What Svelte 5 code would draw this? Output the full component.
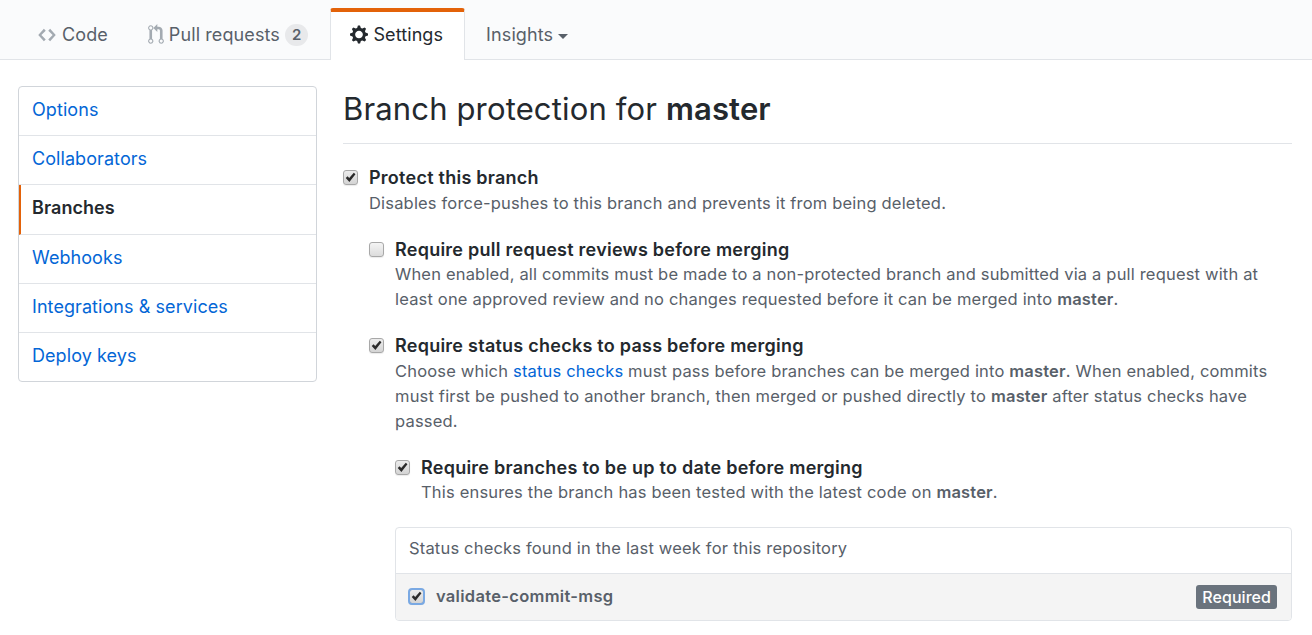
<script lang="ts">
  const menu = [
    { label: 'Options' },
    { label: 'Collaborators' },
    { label: 'Branches', selected: true },
    { label: 'Webhooks' },
    { label: 'Integrations & services' },
    { label: 'Deploy keys' }
  ];
</script>

<nav class="tabs">
  <a class="tab">
    <svg class="icon" width="18" height="20" viewBox="0 0 14 16"><path d="M9.5 3L8 4.5 11.5 8 8 11.5 9.5 13 14 8 9.5 3zm-5 0L0 8l4.5 5L6 11.5 2.5 8 6 4.5 4.5 3z" /></svg>
    Code
  </a>
  <a class="tab">
    <svg class="icon pr" width="16" height="21" viewBox="0 0 12 16"><path d="M11 11.28V5c-.03-.78-.34-1.47-.94-2.06C9.46 2.35 8.78 2.03 8 2H7V0L4 3l3 3V4h1c.27.02.48.11.69.31.21.2.3.42.31.69v6.28A1.993 1.993 0 0 0 10 15a1.993 1.993 0 0 0 1-3.72zm-1 2.92c-.66 0-1.2-.55-1.2-1.2 0-.65.55-1.2 1.2-1.2.65 0 1.2.55 1.2 1.2 0 .65-.55 1.2-1.2 1.2zM4 3c0-1.11-.89-2-2-2a1.993 1.993 0 0 0-1 3.72v6.56A1.993 1.993 0 0 0 2 15a1.993 1.993 0 0 0 1-3.72V4.72c.59-.34 1-.98 1-1.72zm-.8 10c0 .66-.55 1.2-1.2 1.2-.65 0-1.2-.55-1.2-1.2 0-.65.55-1.2 1.2-1.2.65 0 1.2.55 1.2 1.2zM2 4.2C1.34 4.2.8 3.65.8 3c0-.65.55-1.2 1.2-1.2.65 0 1.2.55 1.2 1.2 0 .65-.55 1.2-1.2 1.2z" /></svg>
    Pull requests
    <span class="counter">2</span>
  </a>
  <a class="tab selected">
    <svg class="icon" width="18" height="21" viewBox="0 0 14 16"><path d="M14 8.77v-1.6l-1.94-.64-.45-1.09.88-1.84-1.13-1.13-1.81.91-1.09-.45-.69-1.92h-1.6l-.63 1.94-1.11.45-1.84-.88-1.13 1.13.91 1.81-.45 1.09L0 7.23v1.59l1.94.64.45 1.09-.88 1.84 1.13 1.13 1.81-.91 1.09.45.69 1.92h1.59l.63-1.94 1.11-.45 1.84.88 1.13-1.13-.92-1.81.47-1.09L14 8.75v.02zM7 11c-1.66 0-3-1.34-3-3s1.34-3 3-3 3 1.34 3 3-1.34 3-3 3z" /></svg>
    Settings
  </a>
  <a class="tab insights">
    Insights
    <span class="caret"></span>
  </a>
</nav>

<div class="page">
  <aside class="menu">
    {#each menu as item}
      <a class="menu-item" class:selected={item.selected}>{item.label}</a>
    {/each}
  </aside>

  <main class="content">
    <h2 class="title">Branch protection for <strong>master</strong></h2>

    {#snippet box(checked, focused = false)}
      <span class="box" class:checked class:focused>
        {#if checked}
          <svg width="11" height="11" viewBox="0 0 12 12"><path d="M0.8 6.6 2.8 4.6 4.6 6.6 9.6 0.8 11.4 2.4 4.8 11z" /></svg>
        {/if}
      </span>
    {/snippet}

    <div class="option">
      {@render box(true)}
      <div>
        <div class="option-title">Protect this branch</div>
        <p class="note">Disables force-pushes to this branch and prevents it from being deleted.</p>

        <div class="option nested">
          {@render box(false)}
          <div>
            <div class="option-title">Require pull request reviews before merging</div>
            <p class="note">
              When enabled, all commits must be made to a non-protected branch and submitted via a pull request with at
              least one approved review and no changes requested before it can be merged into <b>master</b>.
            </p>
          </div>
        </div>

        <div class="option nested">
          {@render box(true)}
          <div>
            <div class="option-title">Require status checks to pass before merging</div>
            <p class="note">
              Choose which <a class="link">status checks</a> must pass before branches can be merged into <b>master</b>. When enabled, commits
              must first be pushed to another branch, then merged or pushed directly to <b>master</b> after status checks have
              passed.
            </p>

            <div class="option nested">
              {@render box(true)}
              <div>
                <div class="option-title">Require branches to be up to date before merging</div>
                <p class="note">This ensures the branch has been tested with the latest code on <b>master</b>.</p>
              </div>
            </div>

            <div class="checks">
              <div class="checks-head">Status checks found in the last week for this repository</div>
              <div class="checks-row">
                {@render box(true, true)}
                <span class="check-name">validate-commit-msg</span>
                <span class="required">Required</span>
              </div>
            </div>
          </div>
        </div>
      </div>
    </div>
  </main>
</div>

<style>
  :global(body) {
    margin: 0;
    background: #fff;
    overflow: hidden;
    font-family: Inter, "Liberation Sans", sans-serif;
    font-size: 17px;
    color: #24292e;
  }

  .tabs {
    display: flex;
    align-items: flex-end;
    height: 59px;
    padding-left: 18px;
    background: #fafbfc;
    border-bottom: 1px solid #e1e4e8;
  }

  .tab {
    display: flex;
    align-items: center;
    height: 51px;
    padding: 0 20px;
    color: #586069;
    font-size: 18px;
    letter-spacing: 0.1px;
    box-sizing: border-box;
    margin-bottom: -1px;
  }

  .tab.insights {
    padding-left: 21px;
  }

  .tab .icon {
    fill: #a3aab1;
    margin-right: 6px;
  }

  .tab .icon.pr {
    margin-right: 5px;
  }

  .tab.selected {
    margin-left: 2px;
    height: 52px;
    background: #fff;
    color: #24292e;
    border: 1px solid #e1e4e8;
    border-top: 4px solid #e36209;
    border-bottom: 0;
    border-radius: 3px 3px 0 0;
    padding: 0 21px 4px 19px;
  }

  .tab.selected .icon {
    fill: #24292e;
    margin-right: 5px;
  }

  .counter {
    margin-left: 5px;
    padding: 2px 7px;
    font-size: 15px;
    font-weight: 600;
    line-height: 1.2;
    color: #586069;
    background: rgba(27, 31, 35, 0.08);
    border-radius: 20px;
  }

  .caret {
    margin-left: 5px;
    margin-top: 3px;
    border: 5.5px solid transparent;
    border-top-color: #586069;
    border-bottom: 0;
  }

  .page {
    display: flex;
    gap: 26px;
    padding: 26px 20px 0 18px;
  }

  .menu {
    flex: 0 0 299px;
    box-sizing: border-box;
    align-self: flex-start;
    border: 1px solid #d1d5da;
    border-radius: 4px;
    display: flex;
    flex-direction: column;
    background: #fff;
  }

  .menu-item {
    height: 49.2px;
    box-sizing: border-box;
    display: flex;
    align-items: center;
    padding: 0 0 3px 13px;
    color: #0366d6;
    font-size: 18px;
    letter-spacing: 0.07px;
    border-bottom: 1px solid #e1e4e8;
  }

  .menu-item:last-child {
    height: 48.5px;
    border-bottom: 0;
  }

  .menu-item.selected {
    color: #24292e;
    font-weight: 600;
    padding-left: 11px;
    border-left: 2px solid #e36209;
  }

  .content {
    flex: 1;
    min-width: 0;
  }

  .title {
    margin: 0 0 21px;
    padding: 3px 0 14px;
    font-size: 31px;
    font-weight: 400;
    letter-spacing: 0.15px;
    line-height: 40px;
    border-bottom: 1px solid #e1e4e8;
  }

  .title strong {
    font-weight: 600;
  }

  .option {
    display: flex;
    gap: 11px;
  }

  .nested {
    margin-top: 21px;
  }

  .box {
    flex: 0 0 auto;
    width: 15px;
    height: 15px;
    margin-top: 5px;
    display: flex;
    align-items: center;
    justify-content: center;
    box-sizing: border-box;
    border: 1px solid #a8a8a8;
    border-radius: 3px;
    background: linear-gradient(#f4f4f4, #dcdcdc);
    box-shadow: 0 1px 1px rgba(0, 0, 0, 0.08);
  }

  .box.checked {
    background: linear-gradient(#ececec, #d4d4d4);
  }

  .box svg {
    fill: #2a2a2a;
  }

  .box.focused {
    margin: 0 0 2px;
    outline: 2px solid #7aa9e3;
    outline-offset: -1px;
    border-radius: 3px;
  }

  .option-title {
    font-size: 18px;
    font-weight: 600;
    letter-spacing: 0.25px;
    line-height: 25.5px;
  }

  .note {
    margin: 0;
    font-size: 16.5px;
    letter-spacing: 0.18px;
    line-height: 25px;
    color: #586069;
  }

  .note b {
    font-weight: 600;
  }

  .link {
    color: #0366d6;
  }

  .checks {
    margin-top: 22px;
    border: 1px solid #e1e4e8;
    border-radius: 4px;
    font-size: 16.5px;
    letter-spacing: 0.18px;
    color: #586069;
  }

  .checks-head {
    padding: 0 13px 5px;
    height: 40px;
    display: flex;
    align-items: center;
    border-bottom: 1px solid #e1e4e8;
  }

  .checks-row {
    display: flex;
    align-items: center;
    gap: 12px;
    height: 46px;
    padding: 0 14px 0 13px;
    background: #f4f4f4;
    border-radius: 0 0 4px 4px;
  }

  .check-name {
    font-weight: 600;
    letter-spacing: 0.3px;
    flex: 1;
    padding-bottom: 2px;
  }

  .required {
    padding: 2px 6px;
    background: #6a737d;
    color: #fff;
    font-size: 16px;
    font-weight: 500;
    letter-spacing: 0.05px;
    line-height: 20px;
    border-radius: 3px;
  }
</style>
